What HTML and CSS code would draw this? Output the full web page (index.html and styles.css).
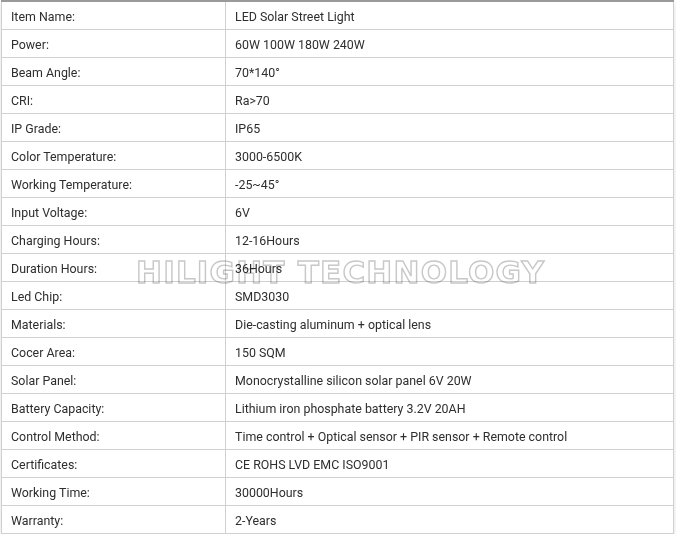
FILE: index.html
```html
<!DOCTYPE html>
<html>
<head>
<meta charset="utf-8">
<link rel="stylesheet" href="styles.css">
</head>
<body>
<div class="wrap">
  <table class="spec">
    <tbody>
      <tr><td class="k">Item Name:</td><td>LED Solar Street Light</td></tr>
      <tr><td class="k">Power:</td><td>60W 100W 180W 240W</td></tr>
      <tr><td class="k">Beam Angle:</td><td>70*140°</td></tr>
      <tr><td class="k">CRI:</td><td>Ra&gt;70</td></tr>
      <tr><td class="k">IP Grade:</td><td>IP65</td></tr>
      <tr><td class="k">Color Temperature:</td><td>3000-6500K</td></tr>
      <tr><td class="k">Working Temperature:</td><td>-25~45°</td></tr>
      <tr><td class="k">Input Voltage:</td><td>6V</td></tr>
      <tr><td class="k">Charging Hours:</td><td>12-16Hours</td></tr>
      <tr><td class="k">Duration Hours:</td><td>36Hours</td></tr>
      <tr><td class="k">Led Chip:</td><td>SMD3030</td></tr>
      <tr><td class="k">Materials:</td><td>Die-casting aluminum + optical lens</td></tr>
      <tr><td class="k">Cocer Area:</td><td>150 SQM</td></tr>
      <tr><td class="k">Solar Panel:</td><td>Monocrystalline silicon solar panel 6V 20W</td></tr>
      <tr><td class="k">Battery Capacity:</td><td>Lithium iron phosphate battery 3.2V 20AH</td></tr>
      <tr><td class="k">Control Method:</td><td>Time control + Optical sensor + PIR sensor + Remote control</td></tr>
      <tr><td class="k">Certificates:</td><td>CE ROHS LVD EMC ISO9001</td></tr>
      <tr><td class="k">Working Time:</td><td>30000Hours</td></tr>
      <tr><td class="k">Warranty:</td><td>2-Years</td></tr>
    </tbody>
  </table>
  <div class="watermark">HILIGHT TECHNOLOGY</div>
</div>
</body>
</html>
```

FILE: styles.css
```css
html, body {
  margin: 0;
  padding: 0;
  background: #fff;
}
.wrap {
  position: relative;
  width: 673px;
  margin-left: 1px;
  box-shadow: 0 3px 8px rgba(0, 0, 0, 0.12);
}
.spec {
  position: relative;
  z-index: 1;
  width: 100%;
  border-collapse: collapse;
  border-top: 2px solid #9a9a9a;
  font-family: Roboto, "Liberation Sans", sans-serif;
  font-size: 12.4px;
  color: #2e2e2e;
}
.spec td {
  border: 1px solid #d0d0d0;
  height: 28px;
  padding: 2px 9px 0;
  box-sizing: border-box;
  line-height: 15px;
  vertical-align: middle;
}
.spec td.k {
  width: 224px;
}
.watermark {
  position: absolute;
  left: 135px;
  top: 254px;
  font-family: "DejaVu Sans", sans-serif;
  font-weight: bold;
  font-size: 31px;
  letter-spacing: 1.2px;
  color: #fff;
  -webkit-text-stroke: 1.4px #c8c8c8;
  white-space: nowrap;
  z-index: 2;
  mix-blend-mode: multiply;
  pointer-events: none;
}
```
